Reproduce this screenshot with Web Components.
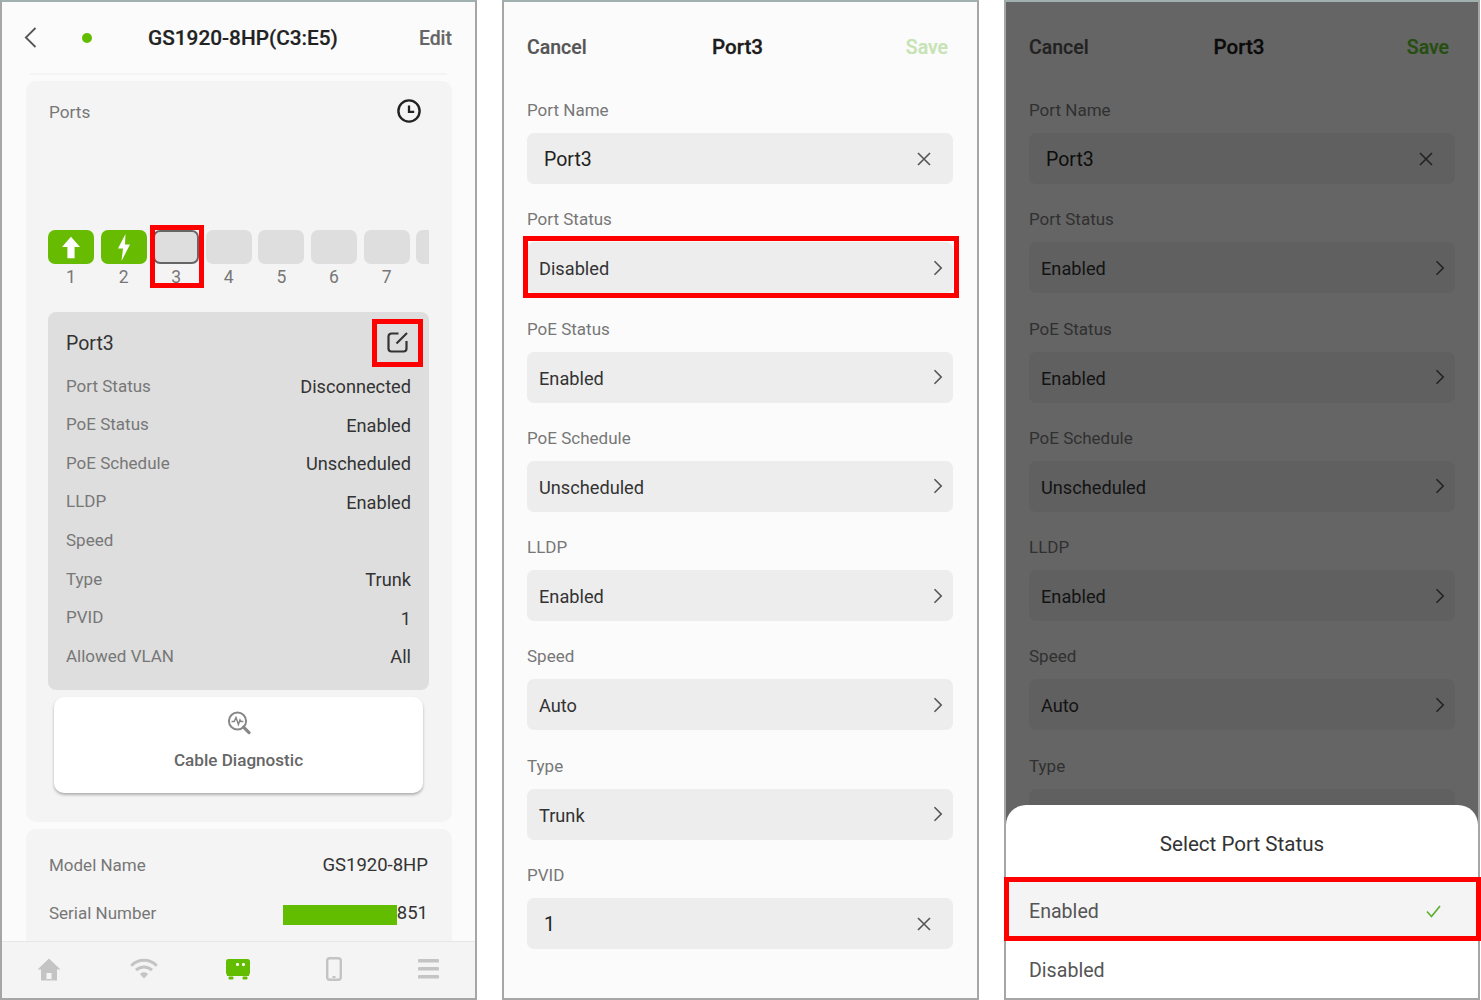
<!DOCTYPE html>
<html lang="en"><head><meta charset="utf-8"><title>Ports</title>
<style>
html,body{margin:0;padding:0;background:#fff}
body{width:1481px;height:1000px;overflow:hidden;font-family:Roboto,"Liberation Sans",sans-serif}
#page{display:flex;gap:25px;align-items:flex-start}
</style></head><body>
<div id="page">
<phone-frame>
  <device-header title="GS1920-8HP(C3:E5)"></device-header>
  <ports-card></ports-card>
  <info-card></info-card>
  <tab-bar slot="footer"></tab-bar>
  <red-mark style="--x:148px;--y:223px;--w:44px;--h:53px"></red-mark>
  <red-mark style="--x:370px;--y:317px;--w:41px;--h:38px"></red-mark>
</phone-frame>
<phone-frame>
  <edit-header></edit-header>
  <port-form status="Disabled"></port-form>
  <red-mark style="--x:19px;--y:234px;--w:426px;--h:52px"></red-mark>
</phone-frame>
<phone-frame style="width:476px">
  <edit-header active></edit-header>
  <port-form status="Enabled" behind></port-form>
  <dim-layer></dim-layer>
  <select-sheet></select-sheet>
  <red-mark style="--x:-2px;--y:875px;--w:467px;--h:54px"></red-mark>
</phone-frame>
</div>
<script>
function def(name, css, html, init){
  customElements.define(name, class extends HTMLElement{
    connectedCallback(){
      if(this.shadowRoot) return;
      const r=this.attachShadow({mode:'open'});
      r.innerHTML='<style>'+css+'</style>'+(typeof html==='function'?html(this):html);
      if(init) init(r,this);
    }
  });
}
const chev='<svg width="10" height="16" viewBox="0 0 10 16"><path d="M1.5 1.2 8.2 8l-6.7 6.8" fill="none" stroke="#555" stroke-width="1.6"/></svg>';
const cross='<svg width="14" height="14" viewBox="0 0 14 14"><path d="M1 1l12 12M13 1 1 13" fill="none" stroke="#555" stroke-width="1.6"/></svg>';

def('phone-frame',`
:host{display:flex;flex-direction:column;position:relative;box-sizing:border-box;flex:none;width:477px;height:1000px;
border:2px solid #a6a6a6;border-top-color:#9fb0ae;background:#fbfbfb;font-family:Roboto,"Liberation Sans",sans-serif}
.main{flex:1;min-height:0;overflow:hidden;display:flex;flex-direction:column}
`,`<div class="main"><slot></slot></div><slot name="footer"></slot>`);

def('red-mark',`:host{position:absolute;left:var(--x);top:var(--y);width:var(--w);height:var(--h);border:5px solid #f00;z-index:5;pointer-events:none}`,'');

def('dim-layer',`:host{position:absolute;inset:0;background:rgba(0,0,0,.595);z-index:2}`,'');

def('device-header',`
:host{display:block;flex:none;height:71px;margin:0 28px;border-bottom:2px solid #f4f4f4;box-sizing:content-box}
.h{display:flex;align-items:center;height:72px;margin:0 -5px 0 -5px;position:relative}
.back{display:block;margin-top:-1px;margin-left:-1px;flex:none}
.dot{width:10px;height:10px;border-radius:50%;background:#62bd00;margin-left:45px;margin-top:-1px;flex:none}
.t{margin-left:56px;font-size:20.8px;font-weight:500;color:#222;flex:1;white-space:nowrap;-webkit-text-stroke:.2px #222}
.e{font-size:19.4px;font-weight:500;color:#666;-webkit-text-stroke:.2px #666}
`,h=>`<div class="h"><svg class="back" width="13" height="21" viewBox="0 0 13 21"><path d="M11.5 1 1.8 10.5l9.7 9.5" fill="none" stroke="#555" stroke-width="1.8"/></svg><span class="dot"></span><span class="t">${h.getAttribute('title')}</span><span class="e">Edit</span></div>`);

def('port-tile',`
:host{display:block;flex:none;width:46px}
.b{box-sizing:border-box;height:34px;border-radius:7px;background:#dedede;display:flex;align-items:center;justify-content:center}
:host([on]) .b{background:#67bc02}
:host([sel]) .b{border:2px solid #666}
.n{height:24px;line-height:24px;text-align:center;font-size:17.5px;color:#777;margin-top:1px}
`,h=>`<div class="b"><slot></slot></div><div class="n">${h.getAttribute('n')}</div>`);

def('detail-row',`
:host{display:flex;justify-content:space-between;align-items:center;height:38.57px;font-size:17px;white-space:nowrap}
.l{color:#777;position:relative;top:-.5px}.v{color:#333;font-size:18.2px;position:relative;top:.5px}
`,h=>`<span class="l">${h.getAttribute('l')}</span><span class="v">${h.getAttribute('v')||''}</span>`);

def('ports-card',`
:host{display:block;flex:none;box-sizing:border-box;margin:6px 23px 0 24px;height:741px;background:#f4f4f4;border-radius:10px;padding:18px 23px 0 22px}
.head{display:flex;justify-content:space-between;align-items:center;height:26px;padding-left:1px}
.head span{font-size:17.2px;color:#777}
.head svg{margin-right:8px;margin-top:-2px}
.tiles{display:flex;gap:6.6px;margin-top:105px;overflow:hidden;height:60px}
.panel{margin-top:22px;height:378px;box-sizing:border-box;background:#dedede;border-radius:8px;padding:7px 18px 0}
.ph{display:flex;justify-content:space-between;align-items:center;height:48px;font-size:19.5px;color:#333}
.ph svg{margin-right:2px;margin-top:-2px}
.btn{margin:7px 6px 0;height:96px;background:#fff;border-radius:10px;box-shadow:0 2px 3px rgba(0,0,0,.28);display:flex;flex-direction:column;align-items:center;box-sizing:border-box;padding-top:14px}
.btn span{font-size:17.1px;font-weight:500;color:#666;margin-top:15px}
`,`<div class="head"><span>Ports</span>
<svg width="24" height="24" viewBox="0 0 24 24"><circle cx="12" cy="12" r="10.6" fill="none" stroke="#222" stroke-width="2.4"/><path d="M12 6.5V12.8H17.2" fill="none" stroke="#222" stroke-width="2.3"/></svg></div>
<div class="tiles">
<port-tile n="1" on><svg width="18" height="23" viewBox="0 0 20 24"><path d="M10 0 20 11.5H14V24H6V11.5H0Z" fill="#fff"/></svg></port-tile>
<port-tile n="2" on><svg width="14" height="27" viewBox="0 0 14 27"><path d="M8.5 0 1 14.5H6L4.5 27 13 10.5H8Z" fill="#fff"/></svg></port-tile>
<port-tile n="3" sel></port-tile><port-tile n="4"></port-tile><port-tile n="5"></port-tile><port-tile n="6"></port-tile><port-tile n="7"></port-tile><port-tile n=""></port-tile>
</div>
<div class="panel"><div class="ph"><span>Port3</span>
<svg width="22" height="22" viewBox="0 0 22 22"><path d="M11.5 2.5H4.5a3 3 0 0 0-3 3v12a3 3 0 0 0 3 3h12a3 3 0 0 0 3-3V10" fill="none" stroke="#333" stroke-width="2.2"/><path d="M9.5 12.5 20 2" fill="none" stroke="#333" stroke-width="2.2"/></svg></div>
<detail-row l="Port Status" v="Disconnected"></detail-row>
<detail-row l="PoE Status" v="Enabled"></detail-row>
<detail-row l="PoE Schedule" v="Unscheduled"></detail-row>
<detail-row l="LLDP" v="Enabled"></detail-row>
<detail-row l="Speed"></detail-row>
<detail-row l="Type" v="Trunk"></detail-row>
<detail-row l="PVID" v="1"></detail-row>
<detail-row l="Allowed VLAN" v="All"></detail-row>
</div>
<div class="btn"><svg width="24" height="24" viewBox="0 0 24 24"><circle cx="10.5" cy="10" r="8.6" fill="none" stroke="#888" stroke-width="2"/><path d="M4.5 10.5H7.2L9 6.5l2.4 7 1.6-4.5 1 1.5h2.4" fill="none" stroke="#888" stroke-width="1.5"/><path d="M16.5 16.2 22 21.6" fill="none" stroke="#888" stroke-width="3.2" stroke-linecap="round"/></svg><span>Cable Diagnostic</span></div>`);

def('info-card',`
:host{display:block;flex:none;margin:7px 23px 0 24px;height:140px;background:#f4f4f4;border-radius:10px 10px 0 0;padding:12px 24px 0 23px;box-sizing:border-box}
.r{display:flex;justify-content:space-between;align-items:center;height:48px;white-space:nowrap;font-size:17px;color:#777}
.v{font-size:18.5px;color:#333;display:flex;align-items:center}
i{display:block;width:114px;height:20px;background:#62bd00;position:relative;top:2px}
`,`<div class="r"><span>Model Name</span><span class="v">GS1920-8HP</span></div>
<div class="r"><span>Serial Number</span><span class="v"><i></i>851</span></div>`);

def('tab-bar',`
:host{display:grid;grid-template-columns:repeat(5,1fr);flex:none;height:56px;background:#f4f4f4;border-top:1px solid #e6e6e6;position:relative;box-sizing:content-box}
div{display:flex;align-items:center;justify-content:center;padding-bottom:2px}
`,`<div><svg width="24" height="23" viewBox="0 0 24 23"><path d="M12 0.5 0.5 11.5H4V22.5H9.5V15H14.5V22.5H20V11.5H23.5Z" fill="#c4c4c4"/><rect x="9.5" y="21" width="5" height="1.5" fill="#c4c4c4"/></svg></div>
<div><svg width="28" height="22" viewBox="0 0 28 22"><g fill="none" stroke="#c4c4c4" stroke-width="3"><path d="M1.2 7.8C8.5 0.4 19.5 0.4 26.8 7.8"/><path d="M6 12.2C10.6 7.8 17.4 7.8 22 12.2"/></g><path d="M9.8 16c2.6-2.2 5.8-2.2 8.4 0L14 20.5Z" fill="#c4c4c4"/></svg></div>
<div><svg width="24" height="21" viewBox="0 0 24 21"><rect x="0" y="0" width="24" height="16" rx="2.5" fill="#62bd00"/><rect x="1" y="15" width="22" height="2" fill="#62bd00"/><rect x="10" y="4" width="3" height="3" rx="1.2" fill="#fff"/><rect x="16" y="4" width="3" height="3" rx="1.2" fill="#fff"/><rect x="2.5" y="17.5" width="5" height="3" rx="1.2" fill="#62bd00"/><rect x="16.5" y="17.5" width="5" height="3" rx="1.2" fill="#62bd00"/></svg></div>
<div style="padding-left:1px"><svg width="16" height="24" viewBox="0 0 16 24"><rect x="1.2" y="1.2" width="13.6" height="21.6" rx="2.5" fill="none" stroke="#c4c4c4" stroke-width="2.4"/><rect x="6.5" y="19" width="3" height="2" fill="#c4c4c4"/></svg></div>
<div style="padding-left:2px"><svg width="22" height="20" viewBox="0 0 22 20"><rect y="0" width="21" height="3.6" rx="1.2" fill="#c4c4c4"/><rect y="8" width="21" height="3.6" rx="1.2" fill="#c4c4c4"/><rect y="16" width="21" height="3.6" rx="1.2" fill="#c4c4c4"/></svg></div>`);

def('edit-header',`
:host{display:grid;grid-template-columns:1fr auto 1fr;align-items:center;flex:none;height:90px;margin:0 29px 6px 23px;font-size:19.5px;font-weight:500;-webkit-text-stroke:.2px currentColor}
.c{color:#555}.t{color:#1c1c1c;font-size:20.6px;-webkit-text-stroke:.3px currentColor}.s{color:#c5e3b3;text-align:right}
:host([active]) .s{color:#5cc02a}
`,`<span class="c">Cancel</span><span class="t">Port3</span><span class="s">Save</span>`);

def('form-field',`
:host{display:block;flex:none;margin-bottom:23.3px}
.l{height:24px;line-height:24px;font-size:17px;color:#777;margin-bottom:11px}
.b{box-sizing:border-box;height:51px;background:#ededed;border-radius:7px;display:flex;align-items:center;justify-content:space-between;padding:0 10px 0 12px;color:#333;font-size:18.2px}
.b span{position:relative;top:1px}
:host([input]) .b{padding:0 22px 0 17px;font-size:19.5px;color:#222}
`,h=>`<div class="l">${h.getAttribute('label')}</div><div class="b"><span>${h.getAttribute('value')}</span>${h.hasAttribute('input')?cross:chev}</div>`);

def('port-form',`:host{display:block;width:426px;margin:0 0 0 23px}`,h=>`
<form-field label="Port Name" value="Port3" input></form-field>
<form-field label="Port Status" value="${h.getAttribute('status')}"></form-field>
<form-field label="PoE Status" value="Enabled"></form-field>
<form-field label="PoE Schedule" value="Unscheduled"></form-field>
<form-field label="LLDP" value="Enabled"></form-field>
<form-field label="Speed" value="Auto"></form-field>
<form-field label="Type" value="Trunk"></form-field>
${h.hasAttribute('behind')?'':'<form-field label="PVID" value="1" input></form-field>'}`);

def('select-sheet',`
:host{position:absolute;left:0;right:0;bottom:0;height:193px;background:#fff;border-radius:20px 20px 0 0;z-index:3;overflow:hidden}
.t{height:77px;display:flex;align-items:center;justify-content:center;font-size:20.6px;color:#333}
.o{height:58px;display:flex;align-items:center;justify-content:space-between;padding:0 37px 0 23px;font-size:19.6px;color:#555}
.o.s{background:#f4f4f4}
.o.d{padding-top:2px;box-sizing:border-box}
`,`<div class="t">Select Port Status</div>
<div class="o s"><span>Enabled</span><svg width="15" height="13" viewBox="0 0 15 13"><path d="M1 6.5 5.5 11.5 14 1" fill="none" stroke="#5cb030" stroke-width="1.7"/></svg></div>
<div class="o d"><span>Disabled</span></div>`);
</script>
</body></html>
